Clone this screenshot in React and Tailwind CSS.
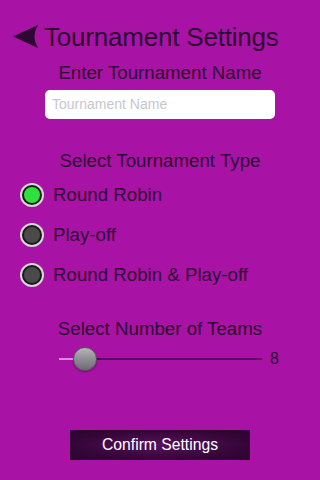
export default function App() {
  const font = { fontFamily: '"Liberation Sans", Arial, sans-serif' };
  const options = [
    { label: 'Round Robin', on: true },
    { label: 'Play-off', on: false },
    { label: 'Round Robin & Play-off', on: false },
  ];

  return (
    <div className="w-[320px] h-[480px] bg-[#a913a5] text-[#2e0833] flex flex-col overflow-hidden" style={font}>
      {/* Header */}
      <div className="flex items-center h-[28px] mt-[23px] pl-[12px]">
        <svg width="28" height="26" viewBox="0 0 28 26" className="shrink-0">
          <path d="M1 12.5 L26 1 Q19 12.5 26 24 Z" fill="#2e0833" />
        </svg>
        <span className="ml-[4px] text-[26px] leading-none tracking-[-0.2px]">Tournament Settings</span>
      </div>

      <div className="mt-[12px] text-center text-[18.7px] leading-[20px]">Enter Tournament Name</div>

      <div className="mt-[7px] mx-[45px] h-[29px] bg-white rounded-[5px] flex items-center px-[7px]">
        <span className="text-[14px] text-[#c7c7cd]">Tournament Name</span>
      </div>

      <div className="mt-[32px] text-center text-[18.7px] leading-[20px]">Select Tournament Type</div>

      <div className="mt-[12px] flex flex-col gap-[16px] pl-[20px]">
        {options.map((o) => (
          <div key={o.label} className="flex items-center h-[24px]">
            <div className="w-[24px] h-[24px] rounded-full bg-[#d8d8d8] flex items-center justify-center shrink-0">
              <div className={`w-[20px] h-[20px] rounded-full border-[2px] border-[#1a1a1a] ${o.on ? 'bg-[#2ee23c]' : 'bg-[#4a4a4a]'}`} />
            </div>
            <span className="ml-[9px] text-[18.7px] leading-[20px]">{o.label}</span>
          </div>
        ))}
      </div>

      <div className="mt-[32px] text-center text-[18.7px] leading-[20px]">Select Number of Teams</div>

      <div className="mt-[8px] flex items-center pl-[59px] h-[24px]">
        <div className="relative w-[203px] h-[24px] flex items-center">
          <div className="h-[2px] w-[26px] bg-[#d58fd6]" />
          <div className="h-[2px] flex-1 bg-[#5a0a5c]" />
          <div className="absolute left-[14px] top-0 w-[24px] h-[24px] rounded-full bg-gradient-to-b from-[#b4b4b8] to-[#6e6a72] border border-[#59525c] shadow-[0_1px_2px_rgba(0,0,0,0.35)]" />
        </div>
        <span className="ml-[8px] text-[16px] leading-none">8</span>
      </div>

      <div className="mt-[59px] mx-auto w-[180px] h-[30px] bg-[radial-gradient(ellipse_at_center,#5a0f5c_0%,#330536_70%,#2a0430_100%)] flex items-center justify-center">
        <span className="text-white text-[15.7px]">Confirm Settings</span>
      </div>
    </div>
  );
}
